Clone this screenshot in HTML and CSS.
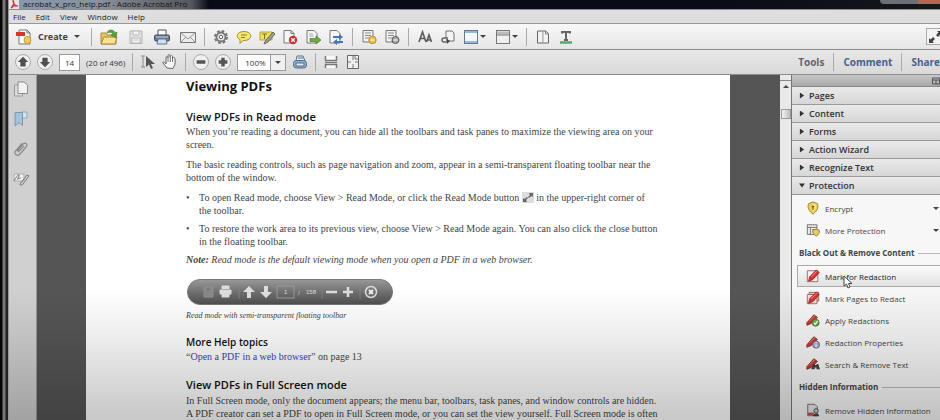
FILE: index.html
```html
<!DOCTYPE html>
<html lang="en">
<head>
<meta charset="utf-8">
<title>acrobat_x_pro_help.pdf - Adobe Acrobat Pro</title>
<link rel="stylesheet" href="styles.css">
</head>
<body>
<div class="window">
  <header class="titlebar">
    <svg class="app-icon" viewBox="0 0 10 10"><rect width="10" height="10" fill="#e9e4e6"/><path d="M2 9C5 6 5 3 4 1c0 4 2 6 5 6-3-1-5 0-7 2z" fill="none" stroke="#c33" stroke-width="1.2"/></svg>
    <span class="title">acrobat_x_pro_help.pdf - Adobe Acrobat Pro</span>
    <span class="window-buttons"><i></i><i class="close"></i></span>
  </header>

  <nav class="menubar">
    <button>File</button><button>Edit</button><button>View</button><button>Window</button><button>Help</button>
  </nav>

  <div class="toolbar main-tools">
    <button class="create">
      <svg class="icon" viewBox="0 0 16 16"><path d="M3 1h8l3 3v11H3z" fill="#fafafa" stroke="#777"/><path d="M11 1v3h3" fill="none" stroke="#777"/><path d="M0 3h9v4H0z" fill="#d8342c"/><circle cx="11.500" cy="11" r="3.500" fill="#f2c95a" stroke="#c79a38"/></svg>
      <span>Create</span><i class="caret"></i>
    </button>
    <i class="sep"></i>
    <div class="group wide">
      <button aria-label="Open"><svg class="icon large" viewBox="0 0 18 16"><path d="M1 15V4h5l1 2h9v9z" fill="#e9c45c" stroke="#a98a3c"/><path d="M1 15l3-7h13l-2 7z" fill="#f8e08c" stroke="#a98a3c"/><path d="M7 4c1-4 7-4 8 0l2-1-1 6-5-3 2-1c-1-2-4-2-6-1z" fill="#57a234" stroke="#3c7a25" stroke-width=".6"/></svg></button>
      <button aria-label="Save"><svg class="icon" viewBox="0 0 16 16"><path d="M2 2h12v12.500H2z" fill="#e0e0e0" stroke="#b5b5b5"/><path d="M5 2h6v4H5zM4 9h8v5H4z" fill="#f4f4f4" stroke="#bbb"/><path d="M6 11h4" stroke="#bbb"/></svg></button>
      <button aria-label="Print"><svg class="icon" viewBox="0 0 16 16"><path d="M4 6V1h8v5" fill="#fff" stroke="#555"/><rect x=".5" y="6" width="15" height="6" rx="1.500" fill="#68788a" stroke="#404a56"/><path d="M2 8h12" stroke="#cfd8e2"/><path d="M4 10h8l1 5H3z" fill="#cfe2f5" stroke="#5b7794"/></svg></button>
      <button aria-label="Email"><svg class="icon" viewBox="0 0 16 16"><path d="M.5 3.500h15v10H.5z" fill="#ececec" stroke="#777"/><path d="M1 4l7 6 7-6M1 13l5-5M15 13l-5-5" fill="none" stroke="#999"/></svg></button>
    </div>
    <i class="sep"></i>
    <div class="group">
      <button aria-label="Preferences"><svg class="icon" viewBox="0 0 16 16"><circle cx="8" cy="8" r="6" fill="none" stroke="#777" stroke-width="2" stroke-dasharray="2.700 2"/><circle cx="8" cy="8" r="4.500" fill="#e4e4e4" stroke="#777" stroke-width="1.800"/><circle cx="8" cy="8" r="1.700" fill="#fff" stroke="#666"/></svg></button>
      <button aria-label="Sticky note"><svg class="icon" viewBox="0 0 16 16"><path d="M8 2.500c9 0 9 9 0 9l-1 0-3 3 0-4C-1 8 1 2.500 8 2.500z" fill="#f4e76a" stroke="#9e9230"/><path d="M5 6h6M5 8.500h4" stroke="#8c8230"/></svg></button>
      <button aria-label="Highlight"><svg class="icon" viewBox="0 0 16 16"><path d="M1 3h12v8H1z" fill="#f1e25a" stroke="#b3a53a"/><path d="M3 5h5M5.500 5v5" stroke="#777244"/><path d="M14 3l2 2-7 8-4 2 2-4z" fill="#a0a07c" stroke="#666"/></svg></button>
      <button aria-label="Delete pages"><svg class="icon" viewBox="0 0 16 16"><path d="M2 1.500h7l3 3V14H2z" fill="#f6f6f6" stroke="#777"/><path d="M9 1.500v3h3" fill="none" stroke="#777"/><circle cx="11" cy="11" r="4.200" fill="#d5302c"/><path d="M9.200 9.200l3.600 3.600m0-3.600l-3.600 3.600" stroke="#fff" stroke-width="1.300"/></svg></button>
      <button aria-label="Extract pages"><svg class="icon" viewBox="0 0 16 16"><path d="M2 1.500h7l3 3V14H2z" fill="#f6f6f6" stroke="#777"/><path d="M4 5h4M4 7h5" stroke="#aaa"/><path d="M5 9.500h6V7l5 4-5 4v-2.500H5z" fill="#6cac43" stroke="#3f7a24" stroke-width=".7"/></svg></button>
      <button aria-label="Replace pages"><svg class="icon" viewBox="0 0 16 16"><path d="M2 1.500h7l3 3V14H2z" fill="#f6f6f6" stroke="#777"/><path d="M5 7h6V5l4 3-4 3V9H5zM15 12H9v-2l-4 3 4 3v-2h6z" fill="#3f78bd"/></svg></button>
    </div>
    <i class="sep"></i>
    <div class="group">
      <button aria-label="Edit form"><svg class="icon" viewBox="0 0 16 16"><path d="M2 1.500h10V13H2z" fill="#f3f3f3" stroke="#777"/><path d="M4 4h6M4 6.500h6M4 9h4" stroke="#888"/><circle cx="11.500" cy="11" r="3.700" fill="#efc04a" stroke="#b68a28"/><path d="M9.500 11h4" stroke="#fff"/></svg></button>
      <button aria-label="Form settings"><svg class="icon" viewBox="0 0 16 16"><path d="M2 1.500h10V13H2z" fill="#f3f3f3" stroke="#777"/><path d="M4 4h6M4 6.500h6M4 9h4" stroke="#888"/><circle cx="11.500" cy="11" r="3.500" fill="#aaa" stroke="#555"/><path d="M9.500 11h4" stroke="#fff"/></svg></button>
    </div>
    <i class="sep"></i>
    <div class="group">
      <button aria-label="Edit text"><svg class="icon" viewBox="0 0 16 16"><path d="M2 13L5.500 3 9 13M3.500 9.500h4M9.500 13l2.500-7 2.500 7M10.500 11h3" fill="none" stroke="#5a5a5a" stroke-width="1.600"/></svg></button>
      <button aria-label="Link"><svg class="icon" viewBox="0 0 16 16"><path d="M6 9V2h6l2 2v8H9" fill="#f4f4f4" stroke="#707070"/><path d="M8 9H4a2 2 0 0 0 0 4h4M6 11h2" fill="none" stroke="#666" stroke-width="1.500"/><path d="M7 10l3 2-3 3z" fill="#444"/></svg></button>
      <button class="with-caret" aria-label="Window layout"><svg class="icon" viewBox="0 0 16 16"><rect x="1.500" y="1.500" width="13" height="13" fill="#f3f7fb" stroke="#64798e"/><path d="M2 3h12M2 13h12" stroke="#96b9dc" stroke-width="2"/></svg><i class="caret"></i></button>
      <button class="with-caret" aria-label="Panel layout"><svg class="icon" viewBox="0 0 16 16"><rect x="1.500" y="1.500" width="13" height="13" fill="#f0f0f0" stroke="#777"/><path d="M2 4h12" stroke="#bbb" stroke-width="3"/><path d="M2 6h12" stroke="#777"/></svg><i class="caret"></i></button>
    </div>
    <i class="sep"></i>
    <div class="group">
      <button aria-label="Compare"><svg class="icon" viewBox="0 0 16 16"><path d="M2.500 2h8l3 2.500V14h-11z" fill="#f2f2f2" stroke="#666"/><path d="M8 2v12" stroke="#999"/><path d="M10.500 2v3h3" fill="none" stroke="#888"/></svg></button>
      <button aria-label="Typewriter"><svg class="icon" viewBox="0 0 16 16"><path d="M4 4.500V3h8v1.500M8 3v8M6 11h4" fill="none" stroke="#666" stroke-width="2"/><path d="M2 13.500h12" stroke="#55aa6c" stroke-width="2.500"/></svg></button>
    </div>
    <button class="read-mode" aria-label="Read mode"><svg class="icon" viewBox="0 0 16 16"><path d="M15 2v5l-1.500-1.500L11 8 9 6l2.500-2.500L10 2zM2 14V9l1.500 1.500L6 8l2 2-2.500 2.500L7 14z" fill="#444"/></svg></button>
  </div>

  <div class="toolbar page-tools">
    <div class="group">
      <button class="round" aria-label="Previous page"><svg viewBox="0 0 16 16"><path d="M8 2l6 6h-3v5H5V8H2z" fill="#505050"/></svg></button>
      <button class="round" aria-label="Next page"><svg viewBox="0 0 16 16"><path d="M8 14l6-6h-3V3H5v5H2z" fill="#505050"/></svg></button>
      <input class="page-number" aria-label="Page" value="14">
      <span class="page-total">(20 of 496)</span>
    </div>
    <i class="sep"></i>
    <div class="group">
      <button aria-label="Select"><svg class="icon" viewBox="0 0 16 16"><path d="M1 2h4M3 2v11M1 13h4" stroke="#888" fill="none"/><path d="M6 2v11l3-2.500L11 15l2-1-2-4h4z" fill="#555"/></svg></button>
      <button aria-label="Hand"><svg class="icon" viewBox="0 0 16 16"><path d="M5 14L1 9c0-2 2-1 3 1V4c0-2 2-2 2 0V2c0-2 2-2 2 0v1c0-2 2.500-2 2.500 0v2c0-2 2.500-2 2.500 0 1 5-1 7-2 9.500z" fill="#f6f6f6" stroke="#666"/><path d="M6 4v4M8.300 3v5M10.600 5v3" stroke="#777"/></svg></button>
    </div>
    <i class="sep"></i>
    <div class="group">
      <button class="round" aria-label="Zoom out"><svg viewBox="0 0 16 16"><path d="M3 8h10" stroke="#555" stroke-width="4"/></svg></button>
      <button class="round" aria-label="Zoom in"><svg viewBox="0 0 16 16"><path d="M3 8h10M8 3v10" stroke="#555" stroke-width="4"/></svg></button>
      <label class="zoom"><select aria-label="Zoom level"><option>100%</option></select><span class="drop"><i class="caret"></i></span></label>
      <button aria-label="Scan"><svg class="icon" viewBox="0 0 16 16"><path d="M4 7l1-5h6l2 5" fill="#e6eef5" stroke="#5c7186"/><path d="M6 4h5" stroke="#5c7186"/><rect x="1.500" y="6.500" width="13" height="7.500" rx="3" fill="#8eb0cf" stroke="#4f6b86"/><path d="M4 9h8v3H4z" fill="#e6f0f8" stroke="#4f6b86"/></svg></button>
    </div>
    <i class="sep"></i>
    <div class="group">
      <button aria-label="Fit width"><svg class="icon" viewBox="0 0 16 16"><path d="M2.500 2v4.500h11V2M2.500 14v-3.500h11V14" fill="#f8f8fa" stroke="#777" stroke-width="1.500"/><path d="M2 8.500h12" stroke="#777"/></svg></button>
      <button aria-label="Fit page"><svg class="icon" viewBox="0 0 16 16"><path d="M2.500 1.500h11v13h-11z" fill="#f0f0f4" stroke="#666"/><path d="M8 2v4M8 10v4M3 8h3M10 8h3M10 2v3h3" fill="none" stroke="#777"/></svg></button>
    </div>
    <div class="pane-tabs">
      <button class="active">Tools</button><button>Comment</button><button>Share</button>
    </div>
  </div>

  <main class="workspace">
    <nav class="side-nav">
      <button aria-label="Page thumbnails"><svg class="icon" viewBox="0 0 16 16"><path d="M1.500 4h8v11h-8z" fill="#ddd" stroke="#999"/><path d="M5 1h6l3.500 3v8.500H5z" fill="#f2f2f2" stroke="#8d8d8d"/></svg></button>
      <button aria-label="Bookmarks"><svg class="icon" viewBox="0 0 16 16"><path d="M8 1h6v6H8z" fill="#d7e3ec" stroke="#93a9ba"/><path d="M2 1.500h7.500v13L6 11.500 2 15z" fill="#a5c3db" stroke="#7898b0"/></svg></button>
      <button aria-label="Attachments"><svg class="icon" viewBox="0 0 16 16"><path d="M4 10l6-7c2-2 5 0 3.500 2.500L7 13c-2.500 3-6.500 0-4.500-3L9 2.500M5 11l6-6" fill="none" stroke="#888" stroke-width="1.200"/></svg></button>
      <button aria-label="Signatures"><svg class="icon" viewBox="0 0 16 16"><path d="M1 3h10v7H1z" fill="#eee" stroke="#aaa"/><path d="M1 10c2-3 4-7 5-6s-3 5-1 4 2-1 3-1M7 13l7-9 2 1-6 8c-1 2-4 1-3 0z" fill="none" stroke="#777"/></svg></button>
    </nav>

    <div class="document">
      <article class="page">
        <h1>Viewing PDFs</h1>
        <h2>View PDFs in Read mode</h2>
        <p>When you’re reading a document, you can hide all the toolbars and task panes to maximize the viewing area on your<br>screen.</p>
        <p class="next">The basic reading controls, such as page navigation and zoom, appear in a semi-transparent floating toolbar near the<br>bottom of the window.</p>
        <ul>
          <li>To open Read mode, choose View &gt; Read Mode, or click the Read Mode button <svg class="inline-icon" viewBox="0 0 12 11"><path d="M0 0h12v11H0z" fill="#ddd"/><path d="M11 1v4L9.500 4 7 6 6 5l2-2-1-2zM1 10V6l1.500 1L5 5l1 1-2 2 1 2z" fill="#666"/></svg> in the upper-right corner of<br>the toolbar.</li>
          <li>To restore the work area to its previous view, choose View &gt; Read Mode again. You can also click the close button<br>in the floating toolbar.</li>
        </ul>
        <p class="note"><b>Note:</b> Read mode is the default viewing mode when you open a PDF in a web browser.</p>
        <figure>
          <svg class="float-bar" viewBox="0 0 206 26">
            <defs><linearGradient id="bar" x2="0" y2="1"><stop stop-color="#999"/><stop offset=".5" stop-color="#707070"/><stop offset="1" stop-color="#4e4e4e"/></linearGradient></defs>
            <rect x=".5" y=".5" width="205" height="25" rx="12.500" fill="url(#bar)" stroke="#777"/>
            <path d="M17 8h9v10h-9zM19 8v4h5V8M19 15h5" fill="#858585" stroke="#909090"/>
            <path d="M35 10V7h7v3M33 11h11v4H33zM35 15h7v3h-7z" fill="#ddd" stroke="#ddd"/>
            <path d="M52 6v14M135 6v14M173 6v14" stroke="#808080"/>
            <path d="M62 7l6 6h-4v6h-4v-6h-4zM79 19l6-6h-4V7h-4v6h-4z" fill="#ddd"/>
            <path d="M90 7h17v12H90z" fill="none" stroke="#999"/>
            <path d="M139 13h11M156 13h10M161 8v10" stroke="#ddd" stroke-width="2.500"/>
            <circle cx="184" cy="13" r="5.500" fill="none" stroke="#ddd" stroke-width="1.500"/><path d="M182 11l4 4m0-4l-4 4" stroke="#eee" stroke-width="2"/>
            <text x="97" y="15">1</text><text x="111" y="16">/</text><text x="119" y="15">158</text>
          </svg>
          <figcaption>Read mode with semi-transparent floating toolbar</figcaption>
        </figure>
        <h3>More Help topics</h3>
        <p>“<a href="#web-browser">Open a PDF in a web browser</a>” on page 13</p>
        <h2 class="full-screen">View PDFs in Full Screen mode</h2>
        <p>In Full Screen mode, only the document appears; the menu bar, toolbars, task panes, and window controls are hidden.<br>A PDF creator can set a PDF to open in Full Screen mode, or you can set the view yourself. Full Screen mode is often</p>
      </article>
    </div>

    <div class="scrollbar"><i class="split"></i><i class="arrow"></i><i class="thumb"></i></div>

    <aside class="panel">
      <div class="panel-top"><svg viewBox="0 0 8 8"><path d="M.5 1h7v6h-7zM.5 3h7M4 3v4" fill="none" stroke="#555"/></svg></div>
      <button class="section"><i class="tri"></i>Pages</button>
      <button class="section"><i class="tri"></i>Content</button>
      <button class="section"><i class="tri"></i>Forms</button>
      <button class="section"><i class="tri"></i>Action Wizard</button>
      <button class="section"><i class="tri"></i>Recognize Text</button>
      <button class="section" aria-expanded="true"><i class="tri open"></i>Protection</button>
      <div class="section-body">
        <button class="item"><svg class="icon" viewBox="0 0 16 16"><path d="M8 1l5 2c2 5-1 9-5 12C4 12 1 8 3 3z" fill="#f0cf4c" stroke="#8b7b45"/><path d="M8 3l3 1c1 3 0 5-3 8" fill="#fae998"/><path d="M8 5v5M6.500 6.500h3" stroke="#806820" stroke-width="1.500"/></svg>Encrypt<i class="caret"></i></button>
        <button class="item"><svg class="icon" viewBox="0 0 16 16"><path d="M1.500 2h11v11h-11zM1.500 5h11M5 5v8M7 7.500h4M7 10h3" fill="#eee" stroke="#666"/><path d="M11.500 7l3.500 1c1 3-1 6-3.500 7C9 13 7 11 8 8z" fill="#edcb58" stroke="#8b7b45"/></svg>More Protection<i class="caret"></i></button>
        <h4>Black Out &amp; Remove Content</h4>
        <button class="item selected"><svg class="icon" viewBox="0 0 16 16"><path d="M1.500 2h12v12.500h-12z" fill="#f8eeee" stroke="#94645f"/><path d="M4 9l8-8 3 3-7 8-5 2z" fill="#d8322e" stroke="#9b2420"/><path d="M6 9l7-7" stroke="#f59a92"/></svg>Mark for Redaction
          <svg class="pointer" viewBox="0 0 10 14"><path d="M1 1v10l2.500-2L5 13l2-1-1.500-3.500H9z" fill="#fff" stroke="#444"/></svg></button>
        <button class="item"><svg class="icon" viewBox="0 0 16 16"><path d="M3.500 1.500h11v10h-11z" fill="#e8b4b0" stroke="#94645f"/><path d="M1.500 4h11v10.500h-11z" fill="#f5dcda" stroke="#94645f"/><path d="M4 9l8-8 3 3-7 8-5 2z" fill="#d8322e" stroke="#9b2420"/><path d="M6 9l7-7" stroke="#f59a92"/></svg>Mark Pages to Redact</button>
        <button class="item"><svg class="icon" viewBox="0 0 16 16"><path d="M1 11l8-9 4 3-7 7-5 2z" fill="#c93632" stroke="#8d2925"/><path d="M4 9l6-6" stroke="#ee9891"/><circle cx="11" cy="11" r="4" fill="#6dac45" stroke="#3f752a"/><path d="M9 11l1.500 2 3-4" fill="none" stroke="#fff" stroke-width="1.400"/></svg>Apply Redactions</button>
        <button class="item"><svg class="icon" viewBox="0 0 16 16"><path d="M1 11l8-9 4 3-7 7-5 2z" fill="#c93632" stroke="#8d2925"/><path d="M4 9l6-6" stroke="#ee9891"/><circle cx="11.500" cy="11" r="4" fill="#a5abc8" stroke="#656b8c"/><path d="M11.500 8v1.500M11.500 10.500V14" stroke="#fff" stroke-width="1.500"/></svg>Redaction Properties</button>
        <button class="item"><svg class="icon" viewBox="0 0 16 16"><path d="M1 11l8-9 4 3-7 7-5 2z" fill="#c93632" stroke="#8d2925"/><path d="M4 9l6-6" stroke="#ee9891"/><path d="M8 8h2v1h2V8h2l2 6h-4v-2h-2v2H6z" fill="#444"/></svg>Search &amp; Remove Text</button>
        <h4>Hidden Information</h4>
        <button class="item"><svg class="icon" viewBox="0 0 16 16"><path d="M2 1.500h8l3 3v10H2z" fill="#e8e8e8" stroke="#75605f"/><path d="M2 11h7v3H2z" fill="#c9514b"/><circle cx="11.500" cy="9" r="2.500" fill="#ccc" stroke="#444"/><path d="M8 15c0-4 7-4 7 0z" fill="#444"/></svg>Remove Hidden Information</button>
      </div>
    </aside>
  </main>
</div>
</body>
</html>
```
FILE: styles.css
```css
* { box-sizing: border-box; }

body {
  margin: 0;
  background: #08090c;
  font-family: "Open Sans", "Noto Sans", sans-serif;
  font-size: 9px;
  color: #444;
}

button {
  display: flex;
  align-items: center;
  margin: 0;
  padding: 0;
  border: 0;
  background: none;
  font: inherit;
  color: inherit;
  white-space: nowrap;
}

svg { display: block; flex: none; }
i { flex: none; }

.window {
  display: flex;
  flex-direction: column;
  height: 100vh;
  padding-left: 9px;
  overflow: hidden;
  background: linear-gradient(90deg, #050505 2px, #777 3px, #777 5px, #222 6px, #222 8px, #999 8px);
}

.icon { width: 16px; height: 16px; }
.icon.large { width: 18px; }

.caret {
  border: 3px solid transparent;
  border-top-color: #444;
  border-bottom: 0;
}

/* Title and menu */
.titlebar {
  display: flex;
  flex: none;
  align-items: flex-end;
  gap: 4px;
  height: 9px;
  background: linear-gradient(90deg, #8798ad, #8a919b 90px, #6b6e74 140px, #55585d 182px, #090c16 200px, #090c16 700px, #15171c);
}
.app-icon { width: 10px; height: 10px; }
.title { font-size: 8px; line-height: 11px; color: #15171c; white-space: nowrap; }
.window-buttons { display: flex; height: 4px; margin: 0 0 auto auto; }
.window-buttons i { width: 38px; background: #6b7077; border-radius: 0 0 0 4px; }
.window-buttons .close { width: 22px; background: #b86450; border-radius: 0; }

.menubar {
  display: flex;
  flex: none;
  gap: 10px;
  height: 15px;
  padding-left: 4px;
  border-top: 1px solid #8c8c8c;
  border-bottom: 1px solid #999;
  background: #dedede;
  font-size: 8px;
  color: #222;
}

/* Toolbars */
.toolbar {
  display: flex;
  flex: none;
  align-items: center;
  height: 26px;
  border-bottom: 1px solid #8d8d8d;
}
.main-tools { padding-left: 7px; background: linear-gradient(#f8f8f8, #e6e6e6); }
.page-tools { height: 25px; padding-left: 6px; background: linear-gradient(#e8e8e8, #d9d9d9); }
.group { display: flex; align-items: center; gap: 7px; }
.main-tools .wide { gap: 10px; }
.page-tools .group { gap: 6px; }

.sep { width: 1px; height: 18px; background: #aaa; }
.main-tools .sep { margin: 0 8px; }
.page-tools .sep { margin: 0 7px; }

.create { gap: 6px; font-size: 9px; font-weight: 700; }
.main-tools .create + .sep { margin-left: 11px; }
.with-caret { gap: 1px; }
.with-caret + .with-caret { margin-left: 2px; }

.read-mode {
  width: 14px;
  height: 17px;
  margin-left: auto;
  border: 1px solid #aaa;
  border-right: 0;
  background: #f4f4f4;
  overflow: hidden;
}

.round {
  justify-content: center;
  width: 16px;
  height: 16px;
  border: 1px solid #aaa;
  border-radius: 50%;
  background: #f0f0f0;
}
.round svg { width: 14px; height: 14px; }

.page-number {
  width: 21px;
  height: 17px;
  padding: 0;
  border: 1px solid #999;
  background: #fff;
  font: inherit;
  font-size: 8px;
  color: #333;
  text-align: center;
}
.page-total { font-size: 8px; color: #333; }

.zoom {
  display: flex;
  width: 49px;
  height: 17px;
  border: 1px solid #999;
  background: #fff;
}
.zoom select {
  flex: 1;
  min-width: 0;
  padding: 0 0 0 7px;
  border: 0;
  appearance: none;
  background: none;
  font: inherit;
  font-size: 8px;
  color: #333;
}
.drop {
  display: flex;
  align-items: center;
  justify-content: center;
  width: 15px;
  border-left: 1px solid #999;
  background: #f0f0f0;
}

.pane-tabs {
  display: flex;
  height: 18px;
  margin-left: auto;
  font-size: 10px;
  font-weight: 700;
  color: #45628e;
}
.pane-tabs button { padding: 0 9px; border-left: 1px solid #aaa; }
.pane-tabs .active { border-left: 0; color: #666; }
.pane-tabs button:last-child { padding-right: 0; }

/* Workspace */
.workspace {
  position: relative;
  display: flex;
  flex: 1;
  min-height: 0;
}
.workspace::after {
  content: "";
  position: absolute;
  inset: 62% 0 0;
  background: linear-gradient(transparent, rgba(0, 0, 0, .08) 40%, rgba(0, 0, 0, .22));
  pointer-events: none;
}

.side-nav {
  display: flex;
  flex: none;
  flex-direction: column;
  align-items: center;
  gap: 14px;
  width: 28px;
  padding-top: 6px;
  padding-right: 4px;
  border-right: 1px solid #999;
  background: #d0d0d0;
}

.document {
  flex: 1;
  min-width: 0;
  padding: 0 50px 0 49px;
  overflow: hidden;
  background: #555;
}

.page {
  min-height: 100%;
  padding: 1px 0 0 100px;
  background: #fff;
  font-family: "Liberation Serif", serif;
  font-size: 10px;
  line-height: 13px;
  color: #444;
  white-space: nowrap;
}
.page p { margin: 0; }
.page h1, .page h2, .page h3 {
  margin: 0;
  font-family: "Open Sans", sans-serif;
  font-weight: 700;
  color: #111;
}
.page h1 { font-size: 13px; line-height: 20px; }
.page h2 { margin-top: 13px; font-size: 11px; font-weight: 600; line-height: 16px; }
.page h3 { margin-top: 12px; font-size: 10px; font-weight: 600; line-height: 16px; }
.page .full-screen { margin-top: 14px; margin-bottom: 1px; }
.page .next { margin-top: 7px; }
.page ul { margin: 7px 0 0; padding-left: 13px; list-style: none; }
.page li::before { content: "•"; float: left; margin-left: -13px; }
.page li + li { margin-top: 5px; }
.page .note { margin-top: 5px; font-style: italic; }
.page a { color: #3a3fc4; text-decoration: none; }

.inline-icon { display: inline-block; width: 12px; height: 11px; vertical-align: -2px; }

figure { margin: 13px 0 0; }
.float-bar { width: 206px; height: 26px; margin-left: 1px; font-family: "Liberation Sans", sans-serif; font-size: 6px; fill: #ddd; }
figcaption { margin-top: 4px; font-size: 8px; font-style: italic; }

.scrollbar {
  display: flex;
  flex: none;
  flex-direction: column;
  align-items: center;
  width: 12px;
  border-right: 1px solid #777;
  background: #e9e9e9;
}
.split { width: 100%; height: 6px; border-bottom: 1px solid #888; }
.arrow { margin-top: 4px; border: 3px solid transparent; border-top: 0; border-bottom-color: #444; }
.thumb { width: 10px; height: 10px; margin-top: 21px; border: 1px solid #999; background: linear-gradient(90deg, #f4f4f4, #bbb); }

/* Tools pane */
.panel {
  flex: none;
  width: 148px;
  overflow: hidden;
  background: #f7f7f7;
}
.panel-top {
  display: flex;
  justify-content: flex-end;
  height: 12px;
  padding-top: 2px;
  border-bottom: 1px solid #888;
  background: linear-gradient(#c8c8c8, #a8a8a8);
}
.panel-top svg { width: 8px; height: 8px; }

.section {
  gap: 4px;
  width: 100%;
  height: 18px;
  padding-left: 7px;
  border-bottom: 1px solid #999;
  background: linear-gradient(#eaeaea, #d6d6d6);
  font-weight: 600;
  color: #333;
}
.tri { width: 6px; height: 6px; background: #333; clip-path: polygon(15% 0, 85% 50%, 15% 100%); }
.tri.open { clip-path: polygon(0 15%, 100% 15%, 50% 85%); }

.section-body { padding: 2px 0 0 5px; }
.section-body h4 {
  display: flex;
  align-items: center;
  gap: 4px;
  margin: 0 0 0 2px;
  font-size: 8px;
  font-weight: 700;
  line-height: 24px;
  white-space: nowrap;
}
.section-body h4::after { content: ""; flex: 1; height: 1px; background: #bbb; }

.item {
  position: relative;
  gap: 5px;
  width: 100%;
  height: 22px;
  padding-left: 8px;
  border: 1px solid transparent;
  border-right: 0;
  font-size: 8px;
}
.item .icon { width: 14px; height: 14px; }
.item .caret { margin-left: auto; margin-right: 1px; }
.item.selected { border-color: #aaa; background: linear-gradient(#fafafa, #e2e2e2); color: #222; }
.pointer { position: absolute; left: 45px; top: 9px; width: 10px; height: 14px; }
```
